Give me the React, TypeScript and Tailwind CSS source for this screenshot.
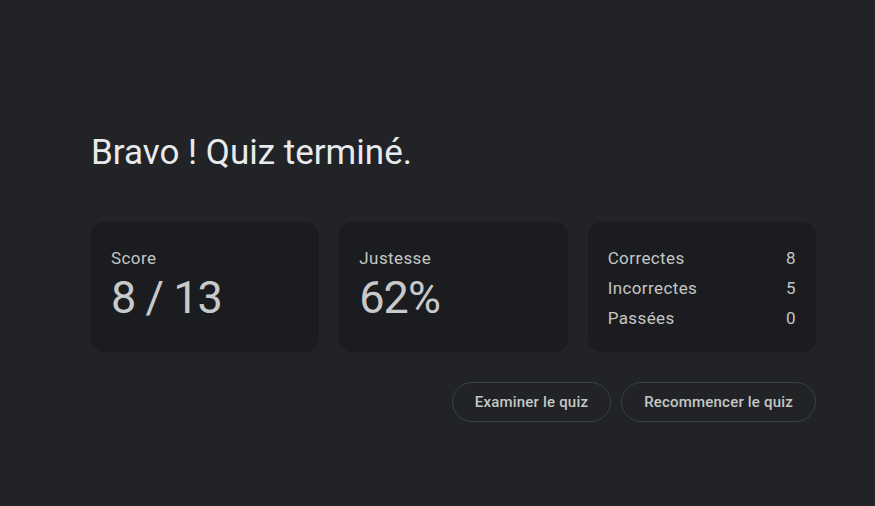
const STATS = [
    { label: "Score", value: "8 / 13" },
    { label: "Justesse", value: "62%" },
];

const BREAKDOWN = [
    { label: "Correctes", count: 8 },
    { label: "Incorrectes", count: 5 },
    { label: "Passées", count: 0 },
];

function StatCard({ label, value }: { label: string; value: string }) {
    return (
        <div className="rounded-[14px] bg-[#1b1c1f] px-5 pt-[26px] h-[130px]">
            <div className="text-[17px] leading-[20px] tracking-[0.4px] text-[#c4c7c5]">{label}</div>
            <div className="mt-[6px] text-[45px] leading-[48px] tracking-[-1px] text-[#c8c9cb]">{value}</div>
        </div>
    );
}

export default function App() {
    return (
        <div
            className="min-h-[506px] w-full bg-[#212327]"
            style={{ fontFamily: "Roboto, 'Liberation Sans', sans-serif" }}
        >
            <div className="ml-[91px] w-[725px] pt-[131px]">
                <h1 className="text-[35px] leading-[44px] font-normal text-[#e8eaed]">
                    Bravo ! Quiz terminé.
                </h1>

                <div className="mt-[47px] grid grid-cols-3 gap-5">
                    {STATS.map((stat) => (
                        <StatCard key={stat.label} {...stat} />
                    ))}

                    <div className="rounded-[14px] bg-[#1b1c1f] px-5 pt-[22px] h-[130px]">
                        {BREAKDOWN.map((row) => (
                            <div
                                key={row.label}
                                className="flex items-center justify-between h-[30px] text-[17px] tracking-[0.4px] text-[#c4c7c5]"
                            >
                                <span>{row.label}</span>
                                <span>{row.count}</span>
                            </div>
                        ))}
                    </div>
                </div>

                <div className="mt-[30px] flex justify-end gap-[10px]">
                    <button className="h-10 rounded-full border border-[#3c4043] px-[22px] text-[15px] tracking-[0.2px] font-medium text-[#c4c7c5]">
                        Examiner le quiz
                    </button>
                    <button className="h-10 rounded-full border border-[#3c4043] px-[22px] text-[15px] tracking-[0.2px] font-medium text-[#c4c7c5]">
                        Recommencer le quiz
                    </button>
                </div>
            </div>
        </div>
    );
}
